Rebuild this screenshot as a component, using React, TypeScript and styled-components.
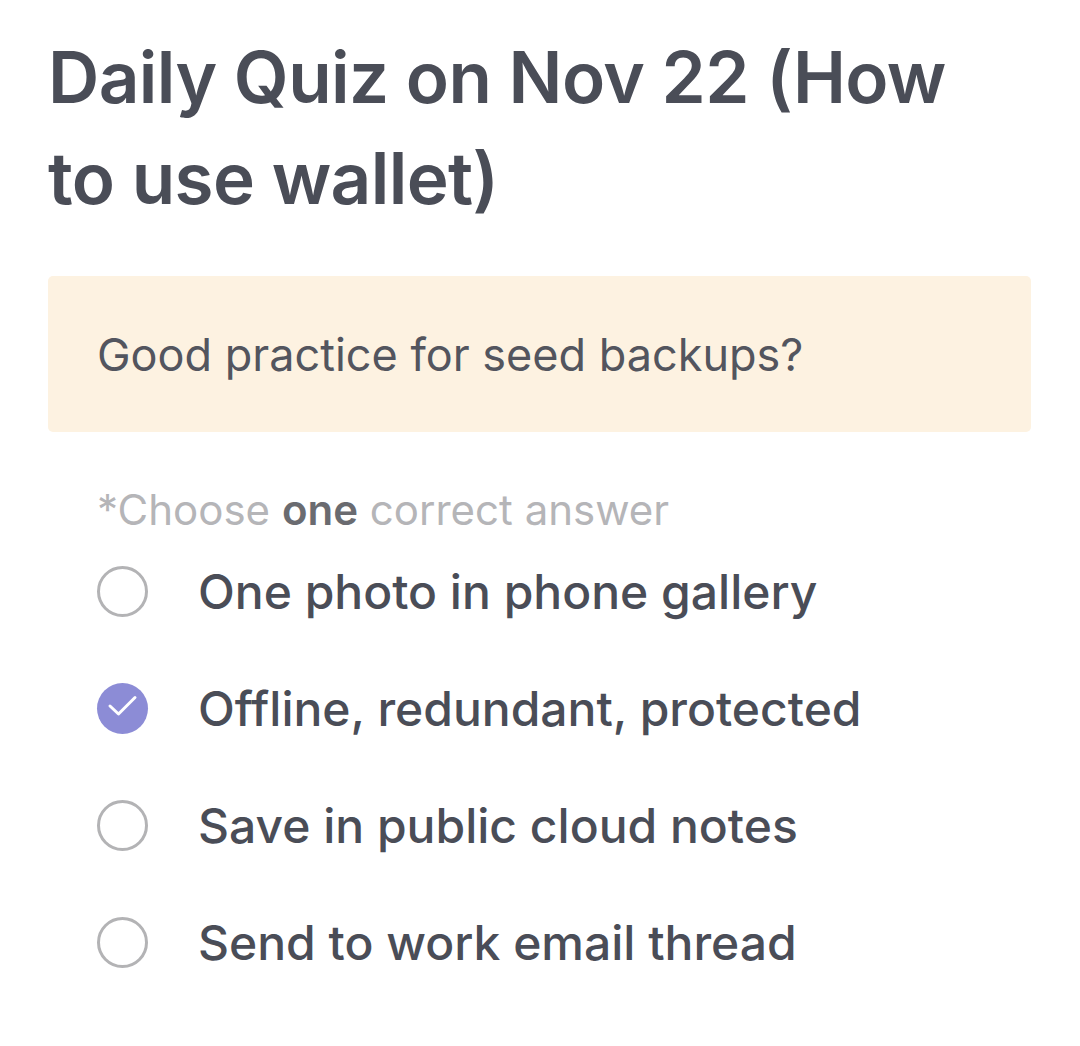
import React from "react";
import styled, { createGlobalStyle } from "styled-components";

const Global = createGlobalStyle`
  html, body { margin: 0; padding: 0; background: #ffffff; }
  body { font-family: Inter, "Noto Sans", sans-serif; }
`;

const Page = styled.div`
  width: 1080px;
  height: 1046px;
  box-sizing: border-box;
  padding: 27px 48px 0 48px;
  background: #ffffff;
  overflow: hidden;
`;

const Title = styled.h1`
  margin: 0;
  font-family: Inter, "Noto Sans", sans-serif;
  font-weight: 600;
  font-size: 71px;
  line-height: 101px;
  letter-spacing: -0.6px;
  color: #4a4d57;
  max-width: 960px;
`;

const QuestionBox = styled.div`
  margin-top: 47px;
  width: 983px;
  height: 156px;
  box-sizing: border-box;
  padding: 0 49px;
  background: #fdf2e1;
  border-radius: 5px;
  display: flex;
  align-items: center;
`;

const QuestionText = styled.p`
  margin: 0;
  font-size: 45px;
  font-weight: 400;
  color: #53555e;
`;

const Hint = styled.p`
  margin: 55px 0 0 49px;
  font-size: 42px;
  line-height: 46px;
  font-weight: 400;
  color: #b5b5b8;
`;

const Strong = styled.b`
  font-weight: 600;
  color: #6a6b70;
`;

const Options = styled.ul`
  list-style: none;
  margin: 0 0 0 49px;
  padding: 0;
  display: flex;
  flex-direction: column;
`;

const Option = styled.li`
  height: 117px;
  display: flex;
  align-items: center;
  gap: 50px;
`;

const Radio = styled.span<{ $checked?: boolean }>`
  width: 51px;
  height: 51px;
  box-sizing: border-box;
  border-radius: 50%;
  flex-shrink: 0;
  display: flex;
  align-items: center;
  justify-content: center;
  border: ${(p) => (p.$checked ? "none" : "3.5px solid #b3b3b5")};
  background: ${(p) => (p.$checked ? "#8c8cd6" : "transparent")};
`;

const OptionText = styled.span`
  font-size: 48px;
  font-weight: 500;
  color: #4a4d57;
`;

const options = [
  { text: "One photo in phone gallery", checked: false },
  { text: "Offline, redundant, protected", checked: true },
  { text: "Save in public cloud notes", checked: false },
  { text: "Send to work email thread", checked: false },
];

export default function App() {
  return (
    <>
      <Global />
      <Page>
        <Title>Daily Quiz on Nov 22 (How to use wallet)</Title>
        <QuestionBox>
          <QuestionText>Good practice for seed backups?</QuestionText>
        </QuestionBox>
        <Hint>
          *Choose <Strong>one</Strong> correct answer
        </Hint>
        <Options>
          {options.map((o) => (
            <Option key={o.text}>
              <Radio $checked={o.checked}>
                {o.checked && (
                  <svg width="51" height="51" viewBox="0 0 51 51" fill="none">
                    <path
                      d="M13 23 L21.5 31 L38 14.5"
                      stroke="#ffffff"
                      strokeWidth="3"
                      strokeLinecap="round"
                      strokeLinejoin="round"
                    />
                  </svg>
                )}
              </Radio>
              <OptionText>{o.text}</OptionText>
            </Option>
          ))}
        </Options>
      </Page>
    </>
  );
}
